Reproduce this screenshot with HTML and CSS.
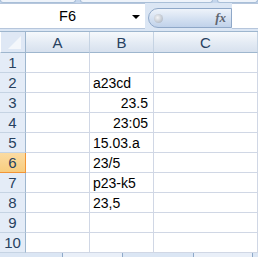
FILE: index.html
```html
<html lang="en">
	<head>
		<meta charset="UTF-8" />
		<title>Sheet</title>
		<link rel="stylesheet" href="styles.css">
	</head>

	<body>
		<div class="top-strip">
			<span class="ribbon-tab first"></span>
			<span class="ribbon-tab second"></span>
			<span class="ribbon-tab third"></span>
		</div>

		<div class="formula-bar">
			<div class="name-box">
				<span class="name">F6</span>
				<span class="arrow"></span>
			</div>
			<div class="fx-pill">
				<span class="knob"></span>
				<span class="fx">fx</span>
			</div>
			<div class="formula-input"></div>
		</div>
		<div class="bar-gap"></div>

		<div class="sheet">
			<div class="corner"><span class="corner-mark"></span></div>
			<div class="col-head">A</div>
			<div class="col-head">B</div>
			<div class="col-head">C</div>

			<div class="row-head">1</div><div class="cell"></div><div class="cell"></div><div class="cell"></div>
			<div class="row-head">2</div><div class="cell"></div><div class="cell">a23cd</div><div class="cell"></div>
			<div class="row-head">3</div><div class="cell"></div><div class="cell num">23.5</div><div class="cell"></div>
			<div class="row-head">4</div><div class="cell"></div><div class="cell num">23:05</div><div class="cell"></div>
			<div class="row-head">5</div><div class="cell"></div><div class="cell">15.03.a</div><div class="cell"></div>
			<div class="row-head active">6</div><div class="cell"></div><div class="cell">23/5</div><div class="cell"></div>
			<div class="row-head">7</div><div class="cell"></div><div class="cell">p23-k5</div><div class="cell"></div>
			<div class="row-head">8</div><div class="cell"></div><div class="cell">23,5</div><div class="cell"></div>
			<div class="row-head">9</div><div class="cell"></div><div class="cell"></div><div class="cell"></div>
			<div class="row-head">10</div><div class="cell"></div><div class="cell"></div><div class="cell"></div>
		</div>

		<div class="sheet-tabs">
			<span class="sheet-tab one"></span>
			<span class="sheet-tab two"></span>
		</div>
	</body>
</html>
```

FILE: styles.css
```css
body {
	font-family: 'Liberation Sans', Arial, sans-serif;
	margin: 0;
	padding: 0;
	width: 258px;
	height: 257px;
	overflow: hidden;
	background: #ffffff;
	color: #000000;
}

.top-strip {
	height: 3px;
	background: #c5d6ec;
	display: flex;
	gap: 4px;
}

.ribbon-tab {
	height: 2px;
	background: #eef3fa;
	border: 1px solid #a9bfd8;
	border-top: none;
	border-radius: 0 0 3px 3px;
}

.ribbon-tab.first {
	width: 76px;
}

.ribbon-tab.second {
	width: 136px;
}

.ribbon-tab.third {
	width: 40px;
}

.formula-bar {
	display: flex;
	height: 26px;
	background: #dbe6f4;
}

.name-box {
	width: 145px;
	background: #ffffff;
	border-top: 1px solid #b6c6dc;
	border-bottom: 1px solid #b6c6dc;
	box-sizing: border-box;
	display: flex;
	align-items: center;
	position: relative;
}

.name {
	flex: 1;
	text-align: center;
	font-size: 14.5px;
	padding-right: 10px;
}

.arrow {
	position: absolute;
	left: 132px;
	top: 11px;
	width: 0;
	height: 0;
	border-left: 4px solid transparent;
	border-right: 4px solid transparent;
	border-top: 4px solid #000000;
}

.fx-pill {
	margin: 5px 0 1px 3px;
	width: 84px;
	box-sizing: border-box;
	border: 1px solid #8fa8c8;
	border-radius: 10px 0 0 10px;
	background: linear-gradient(#eef3fa, #d6e2f2 50%, #c0d2ea);
	display: flex;
	align-items: center;
	justify-content: space-between;
	padding: 0 5px 0 5px;
}

.knob {
	width: 9px;
	height: 9px;
	border-radius: 50%;
	background: radial-gradient(circle at 40% 40%, #f4f5f7, #b9c0ca 70%, #8e98a6);
}

.fx {
	font-family: 'Liberation Serif', serif;
	font-style: italic;
	font-weight: bold;
	font-size: 13px;
	color: #5f6570;
	padding-bottom: 1px;
}

.formula-input {
	flex: 1;
	background: #ffffff;
	border-top: 1px solid #b6c6dc;
	border-bottom: 1px solid #b6c6dc;
	box-sizing: border-box;
}

.bar-gap {
	height: 2px;
	background: #dbe6f4;
	border-bottom: 1px solid #9eb6ce;
}

.sheet {
	display: grid;
	grid-template-columns: 26px 64px 64px 1fr;
	grid-template-rows: 21px repeat(10, 20px);
}

.sheet > div {
	box-sizing: border-box;
}

.corner {
	background: #dfe8f5;
	border-right: 1px solid #9eb6ce;
	border-bottom: 1px solid #9eb6ce;
	border-left: 1px solid #ffffff;
	position: relative;
}

.corner-mark {
	position: absolute;
	right: 4px;
	bottom: 3px;
	width: 0;
	height: 0;
	border-left: 13px solid transparent;
	border-bottom: 13px solid #f4f7fb;
}

.col-head {
	background: linear-gradient(#f6f9fc, #e4ebf4 55%, #d7e1ee);
	border-right: 1px solid #c5d3e3;
	border-bottom: 1px solid #9eb6ce;
	text-align: center;
	font-size: 15px;
	line-height: 21px;
	color: #27415f;
}

.row-head {
	background: #e4ecf7;
	border-right: 1px solid #9eb6ce;
	border-bottom: 1px solid #c5d3e3;
	text-align: center;
	font-size: 15px;
	line-height: 20px;
	color: #27415f;
}

.row-head.active {
	background: linear-gradient(#fbdba2, #f8cd7f);
	border-right: 1px solid #f29536;
	border-bottom: 1px solid #f29536;
}

.cell {
	border-right: 1px solid #d0d7e5;
	border-bottom: 1px solid #d0d7e5;
	font-size: 14px;
	line-height: 21px;
	padding: 0 3px;
	white-space: nowrap;
}

.cell.num {
	text-align: right;
	padding-right: 5px;
}

.sheet-tabs {
	height: 5px;
	background: #dbe6f4;
	position: relative;
}

.sheet-tab {
	position: absolute;
	top: 0;
	height: 5px;
	box-sizing: border-box;
	border: 1px solid #8ea9c9;
	border-top: none;
	background: #e9eff8;
}

.sheet-tab.one {
	left: 62px;
	width: 61px;
}

.sheet-tab.two {
	left: 193px;
	width: 60px;
}
```
